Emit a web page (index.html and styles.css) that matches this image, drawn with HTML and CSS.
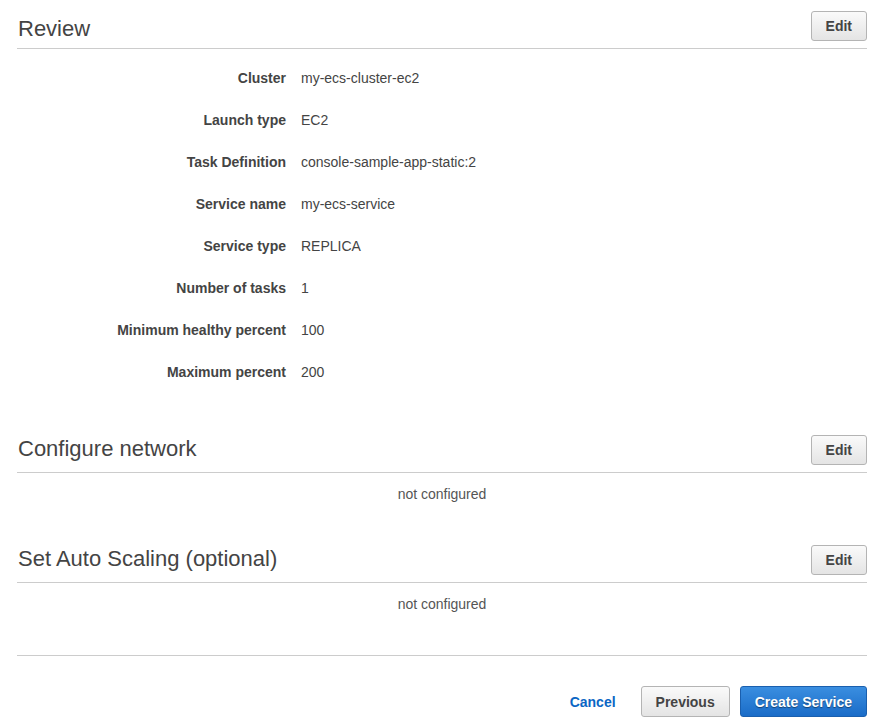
FILE: index.html
```html
<!DOCTYPE html>
<html lang="en">
<head>
<meta charset="utf-8">
<title>Review</title>
<link rel="stylesheet" href="styles.css">
</head>
<body>
<div class="page">
  <section class="section">
    <div class="section-header">
      <h2 class="section-title section-title-lead">Review</h2>
      <button class="btn">Edit</button>
    </div>
    <dl class="details">
      <dt>Cluster</dt><dd>my-ecs-cluster-ec2</dd>
      <dt>Launch type</dt><dd>EC2</dd>
      <dt>Task Definition</dt><dd>console-sample-app-static:2</dd>
      <dt>Service name</dt><dd>my-ecs-service</dd>
      <dt>Service type</dt><dd>REPLICA</dd>
      <dt>Number of tasks</dt><dd>1</dd>
      <dt>Minimum healthy percent</dt><dd>100</dd>
      <dt>Maximum percent</dt><dd>200</dd>
    </dl>
  </section>

  <section class="section">
    <div class="section-header">
      <h2 class="section-title">Configure network</h2>
      <button class="btn">Edit</button>
    </div>
    <p class="empty">not configured</p>
  </section>

  <section class="section">
    <div class="section-header">
      <h2 class="section-title">Set Auto Scaling (optional)</h2>
      <button class="btn">Edit</button>
    </div>
    <p class="empty empty-last">not configured</p>
  </section>

  <div class="footer">
    <a class="link-btn" href="#">Cancel</a>
    <button class="btn btn-footer">Previous</button>
    <button class="btn btn-primary btn-footer">Create Service</button>
  </div>
</div>
</body>
</html>
```

FILE: styles.css
```css
html, body {
  margin: 0;
  padding: 0;
  background: #ffffff;
}

body {
  font-family: Arial, "Liberation Sans", Helvetica, sans-serif;
  font-size: 14px;
  color: #444444;
}

.page {
  padding: 0 9px 0 17px;
}

.section-header {
  display: flex;
  align-items: flex-start;
  justify-content: space-between;
  padding: 11px 0 7px;
  border-bottom: 1px solid #cccccc;
}

.section-title {
  margin: -1px 0 0;
  padding: 0 0 0 1px;
  font-size: 22px;
  font-weight: normal;
  color: #444444;
  line-height: 30px;
}

.section-title-lead {
  margin: 3px 0 -3px;
}

.btn {
  box-sizing: border-box;
  height: 30px;
  padding: 0 14px;
  font-family: Arial, "Liberation Sans", Helvetica, sans-serif;
  font-size: 14px;
  font-weight: bold;
  color: #444444;
  background: linear-gradient(#fafafa, #e4e4e4);
  border: 1px solid #b4b4b4;
  border-radius: 3px;
  cursor: pointer;
}

.details {
  display: grid;
  grid-template-columns: 269px 1fr;
  column-gap: 15px;
  grid-auto-rows: 42px;
  align-items: center;
  margin: 8px 0 0;
  padding-bottom: 31px;
}

.details dt {
  text-align: right;
  font-weight: bold;
  color: #444444;
}

.details dd {
  margin: 0;
  color: #444444;
}

.empty {
  margin: 0;
  padding: 11px 0 30px;
  line-height: 20px;
  text-align: center;
  color: #555555;
}

.empty-last {
  padding-bottom: 41px;
}

.footer {
  display: flex;
  justify-content: flex-end;
  align-items: center;
  gap: 10px;
  border-top: 1px solid #cccccc;
  padding-top: 30px;
}

.link-btn {
  color: #0b66c4;
  font-weight: bold;
  text-decoration: none;
  margin-right: 15px;
}

.btn-footer {
  height: 31px;
}

.btn-primary {
  color: #ffffff;
  background: linear-gradient(#3a8ee0, #1a6cc8);
  border-color: #1a5fae;
  text-shadow: 0 1px 1px rgba(0, 0, 0, 0.45);
}
```
